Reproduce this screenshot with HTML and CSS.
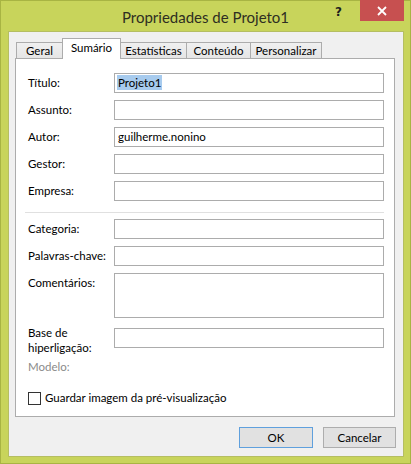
FILE: index.html
```html
<!DOCTYPE html>
<html lang="pt">
<head>
<meta charset="utf-8">
<title>Propriedades de Projeto1</title>
<link rel="stylesheet" href="styles.css">
</head>
<body>
<div class="window">
  <div class="titlebar">
    <div class="tb-spacer"></div>
    <div class="title">Propriedades de Projeto1</div>
    <div class="controls">
      <span class="help">?</span>
      <span class="close"><svg width="10" height="10" viewBox="0 0 10 10"><path d="M1 1 L9 9 M9 1 L1 9" stroke="#fff" stroke-width="1.8" fill="none"/></svg></span>
    </div>
  </div>
  <div class="client">
    <div class="tabs">
      <div class="tab t-geral">Geral</div>
      <div class="tab active t-sum">Sumário</div>
      <div class="tab t-est">Estatísticas</div>
      <div class="tab t-cont">Conteúdo</div>
      <div class="tab t-pers">Personalizar</div>
    </div>
    <div class="panel">
      <div class="row"><label class="lbl">Título:</label><div class="input"><span class="sel">Projeto1</span></div></div>
      <div class="row"><label class="lbl">Assunto:</label><div class="input"></div></div>
      <div class="row"><label class="lbl">Autor:</label><div class="input">guilherme.nonino</div></div>
      <div class="row"><label class="lbl">Gestor:</label><div class="input"></div></div>
      <div class="row"><label class="lbl">Empresa:</label><div class="input"></div></div>
      <div class="sep"></div>
      <div class="row"><label class="lbl">Categoria:</label><div class="input"></div></div>
      <div class="row"><label class="lbl">Palavras-chave:</label><div class="input"></div></div>
      <div class="row top"><label class="lbl">Comentários:</label><div class="input area"></div></div>
      <div class="row two"><label class="lbl"><span class="ln">Base de</span><span class="ln">hiperligação:</span></label><div class="input"></div></div>
      <div class="modelo">Modelo:</div>
      <div class="check"><span class="box"></span><span>Guardar imagem da pré-visualização</span></div>
    </div>
    <div class="buttons">
      <div class="btn default">OK</div>
      <div class="btn">Cancelar</div>
    </div>
  </div>
</div>
</body>
</html>
```
FILE: styles.css
```css
* { box-sizing: border-box; }
html, body { margin: 0; padding: 0; }
body {
  width: 411px;
  height: 464px;
  overflow: hidden;
  font-family: Lato, "Noto Sans", sans-serif;
  font-size: 11.5px;
  color: #000;
}
.window {
  width: 411px;
  height: 464px;
  background: #c8d45b;
  border: 1px solid #a8b443;
  display: flex;
  flex-direction: column;
}
.titlebar {
  height: 30px;
  display: grid;
  grid-template-columns: 1fr auto 1fr;
  align-items: start;
}
.title {
  font-size: 15px;
  color: #2e2e22;
  line-height: 30px;
  padding-top: 1px;
}
.controls {
  justify-self: end;
  display: flex;
  align-items: flex-start;
  margin-right: 6px;
  margin-top: -1px;
}
.help {
  font-family: "DejaVu Sans", sans-serif;
  font-weight: bold;
  font-size: 12px;
  color: #1e1e1e;
  line-height: 12px;
  margin-top: 6px;
  margin-right: 18px;
}
.close {
  width: 44px;
  height: 21px;
  background: #c75050;
  display: flex;
  align-items: center;
  justify-content: center;
}
.close svg { display: block; }
.client {
  margin: 0 6px 6px 7px;
  flex: 1;
  background: #f0f0f0;
  border: 1px solid #b5be62;
  padding: 6px 8px 0 6px;
  display: flex;
  flex-direction: column;
}
.tabs {
  display: flex;
  align-items: flex-end;
  height: 20px;
  margin-left: 1px;
  position: relative;
  z-index: 1;
}
.tab {
  height: 16px;
  border: 1px solid #acacac;
  border-bottom: none;
  background: linear-gradient(#f0f0f0, #e5e5e5);
  text-align: center;
  line-height: 16px;
  margin-left: -1px;
  white-space: nowrap;
}
.tab:first-child { margin-left: 0; }
.tab.active {
  height: 21px;
  margin-bottom: -1px;
  background: #fff;
  line-height: 18px;
}
.t-geral { width: 47px; }
.t-sum { width: 59px; }
.t-est { width: 67px; }
.t-cont { width: 65px; }
.t-pers { width: 72px; }
.panel {
  height: 359px;
  background: #fff;
  border: 1px solid #acacac;
  padding: 14px 10px 0 12px;
  display: flex;
  flex-direction: column;
}
.row {
  display: flex;
  align-items: center;
  margin-bottom: 7px;
}
.lbl {
  width: 86px;
  flex: none;
  line-height: 20px;
  white-space: nowrap;
}
.input {
  flex: 1;
  height: 20px;
  border: 1px solid #acacac;
  background: #fff;
  padding-left: 3px;
  line-height: 18px;
  white-space: nowrap;
}
.sel {
  background: #a7cbee;
  padding: 1px 1px;
  margin-left: -1px;
}
.row.top { align-items: flex-start; }
.area { height: 45px; }
.row.two { align-items: flex-start; }
.row.two .lbl { display: flex; flex-direction: column; }
.row.two .ln { line-height: 15px; height: 15px; }
.row.two .input { margin-top: 3px; }
.sep {
  height: 1px;
  background: #e0e0e0;
  margin: 4px 0 6px -3px;
}
.modelo {
  color: #8a8a8a;
  line-height: 15px;
  margin-top: -3px;
}
.check {
  display: flex;
  align-items: center;
  margin-top: 16px;
  gap: 4px;
}
.box {
  width: 13px;
  height: 13px;
  border: 1px solid #333;
  background: #fff;
  flex: none;
  margin-top: 2px;
}
.buttons {
  display: flex;
  justify-content: flex-end;
  gap: 10px;
  margin-top: 10px;
  margin-right: -1px;
}
.btn {
  width: 73px;
  height: 21px;
  background: #e1e1e1;
  border: 1px solid #adadad;
  text-align: center;
  line-height: 19px;
}
.btn.default {
  width: 74px;
  border-color: #5fa0dd;
}
```
